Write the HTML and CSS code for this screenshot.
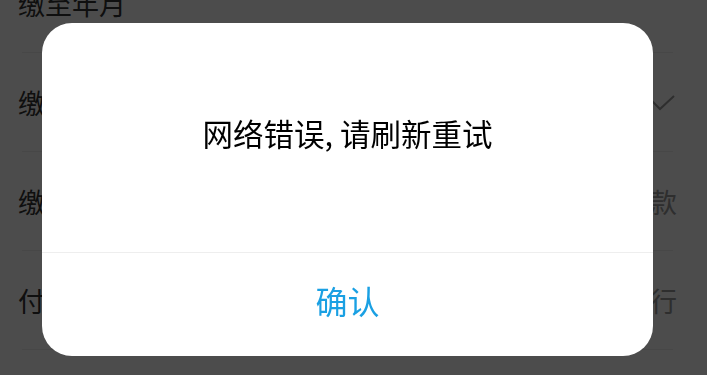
FILE: index.html
```html
<!DOCTYPE html>
<html lang="zh-CN">
<head>
    <meta charset="UTF-8">
    <meta name="viewport" content="width=device-width, initial-scale=1.0">
    <title>网络错误</title>
    <link rel="stylesheet" href="styles.css">
</head>
<body>
    <div class="form-list">
        <div class="form-row">
            <span class="row-label">缴至年月</span>
        </div>
        <div class="form-row">
            <span class="row-label">缴费方式</span>
            <svg class="row-check" width="24" height="16" viewBox="0 0 24 16">
                <polyline points="1,6 9,14 23,1" fill="none" stroke="#999" stroke-width="2"/>
            </svg>
        </div>
        <div class="form-row">
            <span class="row-label">缴费金额</span>
            <span class="row-value">款</span>
        </div>
        <div class="form-row">
            <span class="row-label">付款方式</span>
            <span class="row-value">行</span>
        </div>
    </div>

    <div class="mask">
        <div class="dialog">
            <div class="dialog-body">网络错误, 请刷新重试</div>
            <button class="dialog-button">确认</button>
        </div>
    </div>
</body>
</html>
```

FILE: styles.css
```css
body {
    margin: 0;
    background-color: #fff;
    font-family: "Noto Sans CJK SC", "Noto Sans", sans-serif;
    overflow: hidden;
    height: 375px;
}
.form-list {
    margin-top: -46px;
    padding: 0 30px 0 18px;
}
.form-row {
    height: 99px;
    display: flex;
    align-items: center;
    justify-content: space-between;
    background: linear-gradient(#eee, #eee) no-repeat center bottom / calc(100% - 8px) 1px;
}
.row-label {
    font-size: 27px;
    color: #333;
}
.row-value {
    font-size: 27px;
    color: #999;
}
.row-check {
    margin-right: 2px;
}
.mask {
    position: fixed;
    top: 0;
    left: 0;
    right: 0;
    bottom: 0;
    background-color: rgba(0, 0, 0, 0.7);
}
.dialog {
    width: 611px;
    height: 333px;
    margin: 23px 0 0 42px;
    background-color: #fff;
    border-radius: 30px;
    display: flex;
    flex-direction: column;
    overflow: hidden;
}
.dialog-body {
    height: 219px;
    padding-bottom: 10px;
    display: flex;
    align-items: center;
    justify-content: center;
    font-size: 30.5px;
    color: #000;
    border-bottom: 1px solid #eee;
}
.dialog-button {
    flex: 1;
    border: none;
    background: none;
    font-family: inherit;
    font-size: 32px;
    color: #1aa0e3;
    padding: 0 0 9px;
}
```
